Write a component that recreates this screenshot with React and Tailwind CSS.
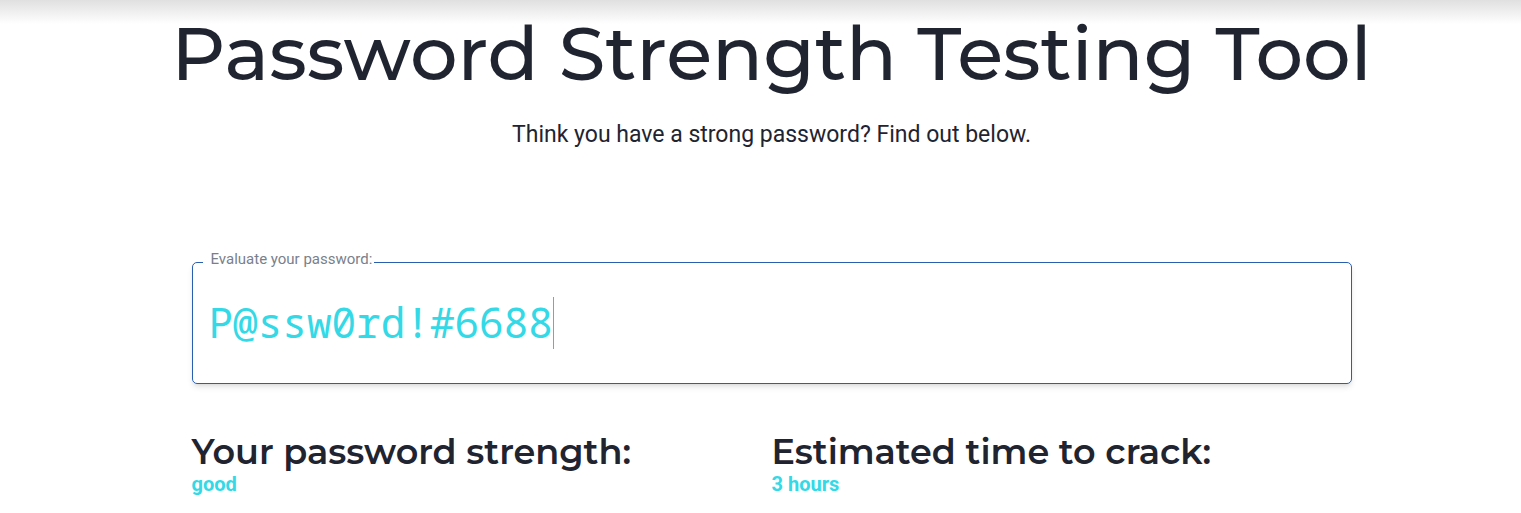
export default function App() {
  return (
    <main className="relative bg-white pb-4 pl-[22px] font-['Roboto',sans-serif] text-[#1f2430]">
      <div className="pointer-events-none absolute inset-x-0 top-0 h-6 bg-linear-to-b from-[#e0e0e0] to-white" />
      <header className="relative pt-2 text-center">
        <h1 className="font-['Montserrat','Inter',sans-serif] text-[75px] leading-[90px] font-medium">Password Strength Testing Tool</h1>
        <p className="mt-5 text-[23px] leading-[34px]">Think you have a strong password? Find out below.</p>
      </header>
      <section className="mx-auto mt-24 w-full max-w-[1160px]">
        <fieldset className="min-w-0 rounded-[5px] border border-[#2a5fb0] px-4 pt-[21px] pb-[34px] shadow-md">
          <legend className="-ml-1.5 pr-0.5 pb-1.5 pl-2 text-[15px] leading-[22px] text-[#7a7f8c]">
            <label htmlFor="password">Evaluate your password:</label>
          </legend>
          <div className="relative font-['Consolas','Noto_Sans_Mono','Roboto_Mono','DejaVu_Sans_Mono',monospace] text-[41px] text-[#33d9e6]">
            <input id="password" type="text" autoComplete="off" spellCheck={false} defaultValue="P@ssw0rd!#6688" className="block h-[52px] w-full bg-transparent caret-transparent outline-none" />
            <span aria-hidden="true" className="absolute inset-y-0 left-[14ch] w-px bg-[#33c4dc]" />
          </div>
        </fieldset>
        <div className="mt-[50px] grid grid-cols-2">
          <div>
            <h2 className="font-['Montserrat','Inter',sans-serif] text-[35px] leading-9 font-semibold">Your password strength:</h2>
            <p className="text-[20px] leading-7 font-bold text-[#33d9e6]">good</p>
          </div>
          <div>
            <h2 className="font-['Montserrat','Inter',sans-serif] text-[35px] leading-9 font-semibold">Estimated time to crack:</h2>
            <p className="text-[20px] leading-7 font-bold text-[#33d9e6]">3 hours</p>
          </div>
        </div>
      </section>
    </main>
  );
}
